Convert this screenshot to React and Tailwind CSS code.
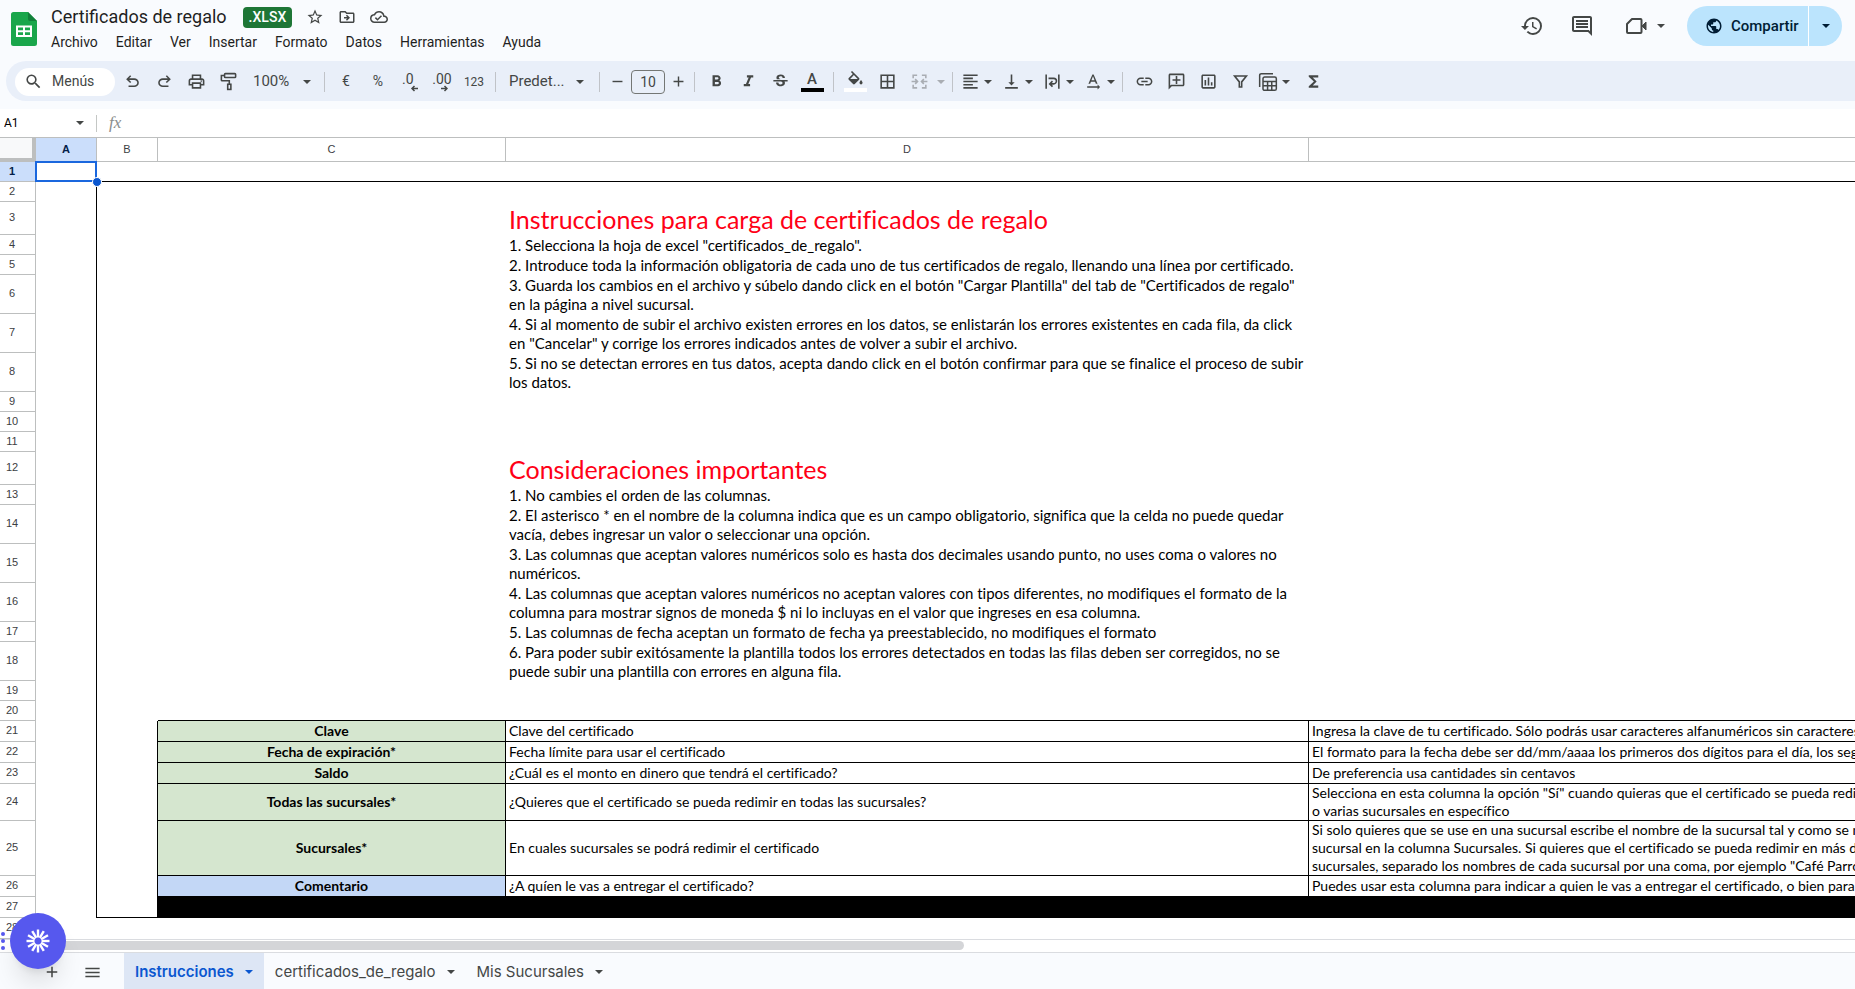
import React from 'react'
import { useState } from 'react'
import {
  MdSearch, MdStarOutline, MdOutlineDriveFileMove, MdOutlineCloudDone, MdHistory, MdOutlineInsertComment,
  MdPublic, MdOutlinePrint, MdFormatBold, MdFormatItalic, MdStrikethroughS, MdFormatAlignLeft,
  MdVerticalAlignBottom, MdLink, MdFunctions, MdAdd, MdRemove, MdMenu, MdBorderAll, MdOutlineInsertChart,
  MdOutlineAddComment, MdTextRotationNone
} from 'react-icons/md'

const menus = ['Archivo', 'Editar', 'Ver', 'Insertar', 'Formato', 'Datos', 'Herramientas', 'Ayuda']

const tabs = ['Instrucciones', 'certificados_de_regalo', 'Mis Sucursales']

const H20 = 'h-[20px]'
const H21 = 'h-[21px]'
const H33 = 'h-[33px]'
const H39 = 'h-[39px]'

// type: title | text | field (green) | optional (blue) | black
const rows = [
  { h: H20 },
  { h: H20 },
  { h: H33, type: 'title', d: ['Instrucciones para carga de certificados de regalo'] },
  { h: H20, type: 'text', d: ['1. Selecciona la hoja de excel "certificados_de_regalo".'] },
  { h: H20, type: 'text', d: ['2. Introduce toda la información obligatoria de cada uno de tus certificados de regalo, llenando una línea por certificado.'] },
  { h: H39, type: 'text', d: ['3. Guarda los cambios en el archivo y súbelo dando click en el botón "Cargar Plantilla" del tab de "Certificados de regalo"', 'en la página a nivel sucursal.'] },
  { h: H39, type: 'text', d: ['4. Si al momento de subir el archivo existen errores en los datos, se enlistarán los errores existentes en cada fila, da click', 'en "Cancelar" y corrige los errores indicados antes de volver a subir el archivo.'] },
  { h: H39, type: 'text', d: ['5. Si no se detectan errores en tus datos, acepta dando click en el botón confirmar para que se finalice el proceso de subir', 'los datos.'] },
  { h: H20 },
  { h: H20 },
  { h: H20 },
  { h: H33, type: 'title', d: ['Consideraciones importantes'] },
  { h: H20, type: 'text', d: ['1. No cambies el orden de las columnas.'] },
  { h: H39, type: 'text', d: ['2. El asterisco * en el nombre de la columna indica que es un campo obligatorio, significa que la celda no puede quedar', 'vacía, debes ingresar un valor o seleccionar una opción.'] },
  { h: H39, type: 'text', d: ['3. Las columnas que aceptan valores numéricos solo es hasta dos decimales usando punto, no uses coma o valores no', 'numéricos.'] },
  { h: H39, type: 'text', d: ['4. Las columnas que aceptan valores numéricos no aceptan valores con tipos diferentes, no modifiques el formato de la', 'columna para mostrar signos de moneda $ ni lo incluyas en el valor que ingreses en esa columna.'] },
  { h: H20, type: 'text', d: ['5. Las columnas de fecha aceptan un formato de fecha ya preestablecido, no modifiques el formato'] },
  { h: H39, type: 'text', d: ['6. Para poder subir exitósamente la plantilla todos los errores detectados en todas las filas deben ser corregidos, no se', 'puede subir una plantilla con errores en alguna fila.'] },
  { h: H20 },
  { h: H20 },
  { h: H21, type: 'field', c: 'Clave', d: ['Clave del certificado'], e: ['Ingresa la clave de tu certificado. Sólo podrás usar caracteres alfanuméricos sin caracteres especiales'] },
  { h: H21, type: 'field', c: 'Fecha de expiración*', d: ['Fecha límite para usar el certificado'], e: ['El formato para la fecha debe ser dd/mm/aaaa los primeros dos dígitos para el día, los segundos'] },
  { h: H21, type: 'field', c: 'Saldo', d: ['¿Cuál es el monto en dinero que tendrá el certificado?'], e: ['De preferencia usa cantidades sin centavos'] },
  { h: 'h-[37px]', type: 'field', c: 'Todas las sucursales*', d: ['¿Quieres que el certificado se pueda redimir en todas las sucursales?'], e: ['Selecciona en esta columna la opción "Sí" cuando quieras que el certificado se pueda redimir', 'o varias sucursales en específico'] },
  { h: 'h-[55px]', type: 'field', c: 'Sucursales*', d: ['En cuales sucursales se podrá redimir el certificado'], e: ['Si solo quieres que se use en una sucursal escribe el nombre de la sucursal tal y como se muestra', 'sucursal en la columna Sucursales. Si quieres que el certificado se pueda redimir en más de una', 'sucursales, separado los nombres de cada sucursal por una coma, por ejemplo "Café Parrot'] },
  { h: H21, type: 'optional', c: 'Comentario', d: ['¿A quíen le vas a entregar el certificado?'], e: ['Puedes usar esta columna para indicar a quien le vas a entregar el certificado, o bien para identificar'] },
  { h: H21, type: 'black' },
  { h: H21 }
]

function Caret() {
  return (
    <svg viewBox="0 0 8 4" className="w-2 h-1 shrink-0" fill="currentColor">
      <path d="M0 0h8L4 4z" />
    </svg>
  )
}

function Separator() {
  return <div className="w-px h-5 mx-[5px] bg-[#c0c3c8] shrink-0" />
}

function ToolButton({ label, disabled, children }) {
  return (
    <button aria-label={label} disabled={disabled} className="w-8 h-7 shrink-0 flex items-center justify-center rounded hover:bg-[#dde3ea]">
      {children}
    </button>
  )
}

function ToolCombo({ label, children }) {
  return (
    <button aria-label={label} aria-haspopup="menu" className="h-7 shrink-0 flex items-center rounded hover:bg-[#dde3ea]">
      <span className="w-6 flex justify-center">{children}</span>
      <span className="w-3 flex justify-center"><Caret /></span>
    </button>
  )
}

function Icon({ size = 19, width = 2, children }) {
  return (
    <svg width={size} height={size} viewBox="0 0 24 24" fill="none" stroke="currentColor" strokeWidth={width}>
      {children}
    </svg>
  )
}

function SheetsLogo() {
  return (
    <svg width="26" height="34" viewBox="0 0 26 34" className="shrink-0">
      <path d="M2.500 0H17l9 9v22.500a2.500 2.500 0 0 1-2.500 2.500h-21A2.500 2.500 0 0 1 0 31.500v-29A2.500 2.500 0 0 1 2.500 0z" fill="#1aa64b" />
      <path d="M17 0l9 9h-7a2 2 0 0 1-2-2z" fill="#12803a" />
      <path fillRule="evenodd" d="M5 13.500h16v11.500H5zM7 15.500v2.800h5v-2.800zM14 15.500v2.800h5v-2.800zM7 20.200V23h5v-2.800zM14 20.200V23h5v-2.800z" fill="#fff" />
    </svg>
  )
}

function Header() {
  return (
    <header className="h-[61px] shrink-0 flex justify-between pl-[11px] pr-[13px]">
      <div className="flex gap-[14px]">
        <div className="pt-3"><SheetsLogo /></div>
        <div className="pt-1">
          <div className="h-[26px] flex items-center">
            <h1 className="text-[18px] leading-6 text-[#1f1f1f]">Certificados de regalo</h1>
            <span className="ml-4 h-[21px] px-[6px] flex items-center rounded bg-[#1e7636] text-white text-[14px] font-medium">.XLSX</span>
            <div className="ml-[14px] flex gap-[14px] text-[#444746]">
              <button aria-label="Destacar"><MdStarOutline size={18} /></button>
              <button aria-label="Mover"><MdOutlineDriveFileMove size={18} /></button>
              <button aria-label="Estado del documento"><MdOutlineCloudDone size={18} /></button>
            </div>
          </div>
          <nav className="h-6 flex items-center gap-[18px] text-[14px] text-[#1f1f1f]">
            {menus.map(menu => <button key={menu}>{menu}</button>)}
          </nav>
        </div>
      </div>
      <div className="h-10 mt-[6px] flex items-center text-[#444746]">
        <button aria-label="Historial" className="w-[50px] flex justify-center"><MdHistory size={24} /></button>
        <button aria-label="Comentarios" className="w-[50px] flex justify-center"><MdOutlineInsertComment size={24} /></button>
        <button aria-label="Videollamada" className="w-[80px] pl-[18px] flex items-center gap-[10px]">
          <svg width="22" height="18" viewBox="0 0 22 18" fill="none" stroke="currentColor" strokeWidth="2">
            <path d="M7 2h8.500a1 1 0 0 1 1 1v12a1 1 0 0 1-1 1H3a1 1 0 0 1-1-1V7z" strokeLinejoin="round" />
            <path d="M17 9l4-4v8z" fill="currentColor" strokeWidth="1" />
          </svg>
          <Caret />
        </button>
        <div className="h-10 flex rounded-full overflow-hidden bg-[#bbe4fd] text-[#001d35]">
          <button className="w-[121px] pl-[18px] flex items-center gap-2 text-[15px] font-medium">
            <MdPublic size={18} />
            Compartir
          </button>
          <button aria-label="Opciones para compartir" className="w-[34px] border-l border-white flex items-center justify-center">
            <Caret />
          </button>
        </div>
      </div>
    </header>
  )
}

function Toolbar() {
  const [fontSize, setFontSize] = useState('10')

  return (
    <div className="h-10 shrink-0 ml-[6px] mb-2 pl-[9px] pt-px flex items-center rounded-l-full bg-[#e9eff9] text-[#444746] text-[14px]">
      <label className="w-[100px] h-7 shrink-0 mr-px pl-[9px] flex items-center gap-[9px] rounded-full bg-white">
        <MdSearch size={19} className="shrink-0" />
        <input aria-label="Menús" placeholder="Menús" className="w-14 text-[14px] outline-none placeholder:text-[#444746]" />
      </label>
      <ToolButton label="Deshacer">
        <Icon width={0}><path fill="currentColor" d="M7 19v-2h7.100q1.575 0 2.738-1T18 13.500 16.838 11 14.100 10H7.800l2.600 2.600L9 14 4 9l5-5 1.400 1.400L7.800 8h6.300q2.425 0 4.163 1.575T20 13.500t-1.737 3.925T14.100 19z" /></Icon>
      </ToolButton>
      <ToolButton label="Rehacer">
        <Icon width={0}><path fill="currentColor" d="M9.900 19q-2.425 0-4.163-1.575T4 13.500t1.737-3.925T9.900 8h6.300l-2.600-2.600L15 4l5 5-5 5-1.400-1.400 2.600-2.600H9.900q-1.575 0-2.738 1T6 13.500 7.162 16 9.900 17H17v2z" /></Icon>
      </ToolButton>
      <ToolButton label="Imprimir"><MdOutlinePrint size={19} /></ToolButton>
      <ToolButton label="Copiar formato">
        <Icon>
          <rect x="7" y="2" width="14" height="5" rx="1" />
          <path d="M7 4.500H3V10a1 1 0 0 0 1 1h9v4" />
          <rect x="11" y="15.500" width="4" height="6.500" />
        </Icon>
      </ToolButton>
      <div className="w-[75px] shrink-0 pl-[9px] pr-2 flex items-center relative">
        <select aria-label="Zoom" className="w-full appearance-none outline-none text-[15px]" defaultValue="100%">
          <option>100%</option>
        </select>
        <span className="absolute right-2 pointer-events-none"><Caret /></span>
      </div>
      <Separator />
      <ToolButton label="Formato de moneda">€</ToolButton>
      <ToolButton label="Formato de porcentaje"><span className="text-[14px]">%</span></ToolButton>
      <ToolButton label="Reducir decimales">
        <span className="flex flex-col leading-3 text-left pt-0.5">
          .0
          <svg width="16" height="7" viewBox="0 0 16 7" fill="none" stroke="currentColor" strokeWidth="1.5"><path d="M16 3.500h-6M12.500 1L10 3.500 12.500 6" /></svg>
        </span>
      </ToolButton>
      <ToolButton label="Aumentar decimales">
        <span className="flex flex-col leading-3 text-left pt-0.5">
          .00
          <svg width="16" height="7" viewBox="0 0 16 7" fill="none" stroke="currentColor" strokeWidth="1.5"><path d="M9 3.500h6M12.500 1L15 3.500 12.500 6" /></svg>
        </span>
      </ToolButton>
      <ToolButton label="Más formatos"><span className="text-[12px]">123</span></ToolButton>
      <Separator />
      <div className="w-[93px] shrink-0 pl-2 pr-2 flex items-center relative">
        <select aria-label="Fuente" className="w-full appearance-none outline-none text-[15px]" defaultValue="Predet...">
          <option>Predet...</option>
        </select>
        <span className="absolute right-[10px] pointer-events-none"><Caret /></span>
      </div>
      <Separator />
      <button aria-label="Reducir tamaño" className="w-6 flex justify-center"><MdRemove size={17} /></button>
      <input
        aria-label="Tamaño de fuente"
        value={fontSize}
        onChange={e => setFontSize(e.target.value)}
        className="w-[34px] h-6 mx-0.5 rounded border border-[#747775] text-center text-[14px] outline-none"
      />
      <button aria-label="Aumentar tamaño" className="w-[22px] flex justify-center"><MdAdd size={17} /></button>
      <Separator />
      <ToolButton label="Negrita"><MdFormatBold size={19} /></ToolButton>
      <ToolButton label="Cursiva"><MdFormatItalic size={19} /></ToolButton>
      <ToolButton label="Tachado"><MdStrikethroughS size={19} /></ToolButton>
      <ToolButton label="Color de texto">
        <span className="flex flex-col items-center gap-px">
          <span className="text-[15px] leading-4 font-medium">A</span>
          <span className="w-[23px] h-1 bg-black" />
        </span>
      </ToolButton>
      <Separator />
      <ToolButton label="Color de relleno">
        <span className="flex flex-col items-center gap-0.5 pb-px">
          <svg width="19" height="15" viewBox="0 0 24 19" fill="currentColor">
            <path d="M16.560 8.940 7.620 0 6.210 1.410l2.380 2.380-5.150 5.150a1.490 1.490 0 0 0 0 2.120l5.500 5.500c.29.29.68.44 1.060.44s.77-.15 1.060-.44l5.500-5.500c.59-.58.59-1.530 0-2.120zM5.210 10 10 5.210 14.790 10H5.210zM19 11.500s-2 2.170-2 3.500c0 1.100.9 2 2 2s2-.9 2-2c0-1.330-2-3.500-2-3.500z" />
          </svg>
          <span className="w-[23px] h-1 bg-white" />
        </span>
      </ToolButton>
      <ToolButton label="Bordes"><MdBorderAll size={19} /></ToolButton>
      <button aria-label="Combinar celdas" disabled className="shrink-0 flex items-center text-[#a9adb3]">
        <span className="w-8 flex justify-center">
          <Icon>
            <path d="M9 4H4v4M4 16v4h5M15 4h5v4M20 16v4h-5M2 12h7M6.500 9L9.500 12l-3 3M22 12h-7M17.500 9l-3 3 3 3" />
          </Icon>
        </span>
        <span className="w-3 flex justify-center"><Caret /></span>
      </button>
      <Separator />
      <div className="flex gap-[5px]">
        <ToolCombo label="Alineación horizontal"><MdFormatAlignLeft size={19} /></ToolCombo>
        <ToolCombo label="Alineación vertical"><MdVerticalAlignBottom size={19} /></ToolCombo>
        <ToolCombo label="Ajuste de texto">
          <Icon>
            <path d="M4 3v18M20 3v18M7 8h6.500a3.500 3.500 0 0 1 0 7H9M12 11.500L8.500 15l3.500 3.500" />
          </Icon>
        </ToolCombo>
        <ToolCombo label="Rotación de texto"><MdTextRotationNone size={20} /></ToolCombo>
      </div>
      <Separator />
      <ToolButton label="Insertar enlace"><MdLink size={19} /></ToolButton>
      <ToolButton label="Insertar comentario"><MdOutlineAddComment size={19} className="-scale-x-100" /></ToolButton>
      <ToolButton label="Insertar gráfico"><MdOutlineInsertChart size={19} /></ToolButton>
      <ToolButton label="Crear filtro">
        <Icon><path d="M4.500 5h15L13.500 12.500V19h-3v-6.500z" /></Icon>
      </ToolButton>
      <div className="flex gap-[5px]">
        <ToolCombo label="Vistas de filtro">
          <Icon size={20} width={1.8}>
            <path d="M2 18V4a2 2 0 0 1 2-2h14" />
            <rect x="6" y="6" width="16" height="16" rx="2" />
            <path d="M6 11.500h16M6 16.500h16M11.500 11.500V22M16.500 11.500V22" />
          </Icon>
        </ToolCombo>
        <ToolButton label="Funciones"><MdFunctions size={19} /></ToolButton>
      </div>
    </div>
  )
}

function FormulaBar() {
  return (
    <div className="h-[29px] shrink-0 flex items-center bg-white border-b border-[#bdbfbf]">
      <div className="w-24 pl-1 pr-3 flex items-center justify-between text-[#444746]">
        <input aria-label="Cuadro de nombres" defaultValue="A1" className="w-14 text-[12px] text-black outline-none" />
        <Caret />
      </div>
      <div className="w-px h-[17px] bg-[#c4c7c5]" />
      <span className="ml-3 text-[17px] leading-5 italic text-[#8a8d8c] font-['Liberation_Serif',serif]">fx</span>
      <input aria-label="Barra de fórmulas" className="flex-1 ml-2 outline-none" />
    </div>
  )
}

function Lines({ items }) {
  return items.map(line => <div key={line}>{line}</div>)
}

function SheetRow({ row, index }) {
  const number = index + 1
  const first = number === 1
  const framed = number >= 2 && number <= 27
  const boxed = row.type === 'field' || row.type === 'optional'
  const black = row.type === 'black'

  // only the rows that carry a line get one, the rest of the grid is hidden
  const lineBelow = first || number === 20 || boxed || black
  const bottom = lineBelow ? 'border-b border-black' : ''
  const bottomB = first || black ? 'border-b border-black' : ''

  let textClass = 'align-bottom text-[15px] leading-[19px]'
  if (row.type === 'title') textClass = 'align-bottom text-[25px] leading-8 text-[#ff0016]'
  if (boxed) textClass = 'align-middle text-[14px] leading-[18px]'

  return (
    <tr className={row.h}>
      <th
        scope="row"
        className={`p-0 pr-[11px] pb-0.5 text-center text-[11px] leading-4 border-b border-r border-[#bdbfbf] font-['Liberation_Sans',sans-serif] ${first ? 'bg-[#cbdefb] font-bold text-[#041e49]' : 'bg-white font-normal text-[#3c4043]'}`}
      >
        {number}
      </th>
      <td className={`p-0 relative ${framed ? 'border-r border-black' : ''}`}>
        {first && (
          <>
            <div className="absolute -left-px -top-px right-0 bottom-0 border-2 border-[#1a67de]" />
            <div className="absolute -right-[5px] -bottom-[5px] w-[10px] h-[10px] rounded-full bg-[#0b57d0] border border-white z-10" />
          </>
        )}
      </td>
      <td className={`p-0 ${bottomB} ${boxed || black ? 'border-r border-r-black' : ''}`}></td>
      <td
        className={`p-0 text-center font-bold ${textClass} ${bottom} ${boxed ? 'border-r' : ''} ${row.type === 'field' ? 'bg-[#d5e6cf]' : ''} ${row.type === 'optional' ? 'bg-[#c3d7f6]' : ''} ${black ? 'bg-black' : ''}`}
      >
        {row.c}
      </td>
      <td className={`p-0 pl-[3px] whitespace-nowrap ${textClass} ${bottom} ${boxed ? 'border-r border-r-black' : ''} ${black ? 'bg-black' : ''}`}>
        {row.d && <Lines items={row.d} />}
      </td>
      <td className={`p-0 pl-[3px] whitespace-nowrap overflow-hidden ${textClass} ${bottom} ${black ? 'bg-black' : ''}`}>
        {row.e && <Lines items={row.e} />}
      </td>
    </tr>
  )
}

function Sheet() {
  const headClass = "p-0 pb-0.5 border-b border-r border-[#bdbfbf] text-[11px] leading-4 font-['Liberation_Sans',sans-serif]"
  return (
    <main className="flex-1 min-h-0 overflow-hidden bg-white">
      <table className="w-full table-fixed border-separate border-spacing-0 text-black font-['Lato',sans-serif] [font-variant-ligatures:none]">
        <colgroup>
          <col className="w-[36px]" />
          <col className="w-[61px]" />
          <col className="w-[61px]" />
          <col className="w-[348px]" />
          <col className="w-[803px]" />
          <col />
        </colgroup>
        <thead>
          <tr className="h-6">
            <th className="p-0 bg-[#f8f9fa] border-b-4 border-r-4 border-[#bdbfbf]"></th>
            <th scope="col" className={`${headClass} font-bold bg-[#cbdefb] text-[#041e49]`}>A</th>
            <th scope="col" className={`${headClass} font-normal text-[#3c4043]`}>B</th>
            <th scope="col" className={`${headClass} font-normal text-[#3c4043]`}>C</th>
            <th scope="col" className={`${headClass} font-normal text-[#3c4043]`}>D</th>
            <th className="p-0 border-b border-[#bdbfbf]"></th>
          </tr>
        </thead>
        <tbody>
          {rows.map((row, index) => <SheetRow key={index} row={row} index={index} />)}
        </tbody>
      </table>
    </main>
  )
}

function SheetTabs() {
  const [active, setActive] = useState('Instrucciones')

  return (
    <footer className="shrink-0">
      <div className="h-[13px] border-t border-[#dadce0] bg-white pl-9 pt-px">
        <div className="w-[51%] h-[9px] rounded-full bg-[#d4d5d8]" />
      </div>
      <div className="h-[37px] flex border-t border-[#dadce0] bg-[#f9fbfe] text-[#444746] font-['Inter',sans-serif]">
        <button aria-label="Añadir hoja" className="w-10 ml-8 flex items-center justify-center pt-0.5"><MdAdd size={18} /></button>
        <button aria-label="Todas las hojas" className="w-10 mr-3 flex items-center justify-center pt-0.5"><MdMenu size={19} /></button>
        {tabs.map(tab => (
          <button
            key={tab}
            onClick={() => setActive(tab)}
            className={`px-[11px] pt-0.5 flex items-center gap-[11px] text-[15px] ${active === tab ? 'bg-[#dde6f5] text-[#0b57d0] font-semibold' : ''}`}
          >
            {tab}
            <Caret />
          </button>
        ))}
      </div>
    </footer>
  )
}

function AssistantButton() {
  return (
    <div className="fixed left-0 bottom-5 z-20 flex items-center gap-[5px]">
      <div className="w-[5px] flex flex-col items-end gap-[3px]">
        <span className="w-1 h-1 rounded-full bg-[#5658ee]" />
        <span className="w-1 h-1 rounded-full bg-[#5658ee]" />
        <span className="w-1 h-1 rounded-full bg-[#5658ee]" />
      </div>
      <button aria-label="Asistente" className="w-14 h-14 rounded-full bg-[#5658ee] text-white shadow-xl flex items-center justify-center">
        <svg width="24" height="24" viewBox="-12 -12 24 24" stroke="currentColor" strokeWidth="2.4">
          {[0, 30, 60, 90, 120, 150, 180, 210, 240, 270, 300, 330].map(angle => (
            <line key={angle} x1="0" y1="-3.5" x2="0" y2="-11.500" transform={`rotate(${angle})`} />
          ))}
        </svg>
      </button>
    </div>
  )
}

function App() {
  return (
    <div className="h-screen flex flex-col overflow-hidden bg-[#f9fbfe] font-['Roboto',sans-serif]">
      <Header />
      <Toolbar />
      <FormulaBar />
      <Sheet />
      <SheetTabs />
      <AssistantButton />
    </div>
  )
}

export default App
